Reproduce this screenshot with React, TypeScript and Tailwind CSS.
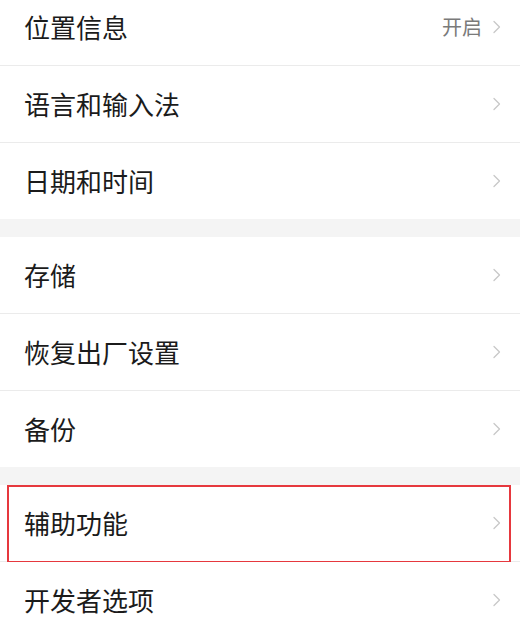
import React from "react";

function Chevron() {
  return (
    <svg width="10" height="14" viewBox="0 0 10 14" className="shrink-0">
      <path d="M2 1.5 L7.5 7 L2 12.5" fill="none" stroke="#c8c8c8" strokeWidth="1.3" strokeLinecap="round" strokeLinejoin="round" />
    </svg>
  );
}

function Row({ label, value, last, highlight }: { label: string; value?: string; last?: boolean; highlight?: boolean }) {
  return (
    <div className="relative">
      <div className="flex h-[76px] items-center justify-between pl-[24px] pr-[18px] bg-white">
        <span className="text-[26px] leading-none text-[#1b1b1b]">{label}</span>
        <div className="flex items-center gap-[10px]">
          {value && <span className="text-[20px] leading-none text-[#7a7a7a]">{value}</span>}
          <Chevron />
        </div>
      </div>
      {!last && <div className="h-px bg-[#ebebeb]" />}
      {highlight && (
        <div className="absolute left-[7px] right-[9px] top-0 bottom-[-1px] border-[2.5px] border-[#e6383e]" />
      )}
    </div>
  );
}

export default function App() {
  return (
    <div
      className="w-[520px] h-[621px] overflow-hidden bg-white"
      style={{ fontFamily: '"Noto Sans CJK SC", "Noto Sans", sans-serif' }}
    >
      <div className="-mt-[11px]">
        <Row label="位置信息" value="开启" />
        <Row label="语言和输入法" />
        <Row label="日期和时间" last />
        <div className="h-[18px] bg-[#f4f4f4]" />
        <Row label="存储" />
        <Row label="恢复出厂设置" />
        <Row label="备份" last />
        <div className="h-[18px] bg-[#f4f4f4]" />
        <Row label="辅助功能" highlight />
        <Row label="开发者选项" />
      </div>
    </div>
  );
}
